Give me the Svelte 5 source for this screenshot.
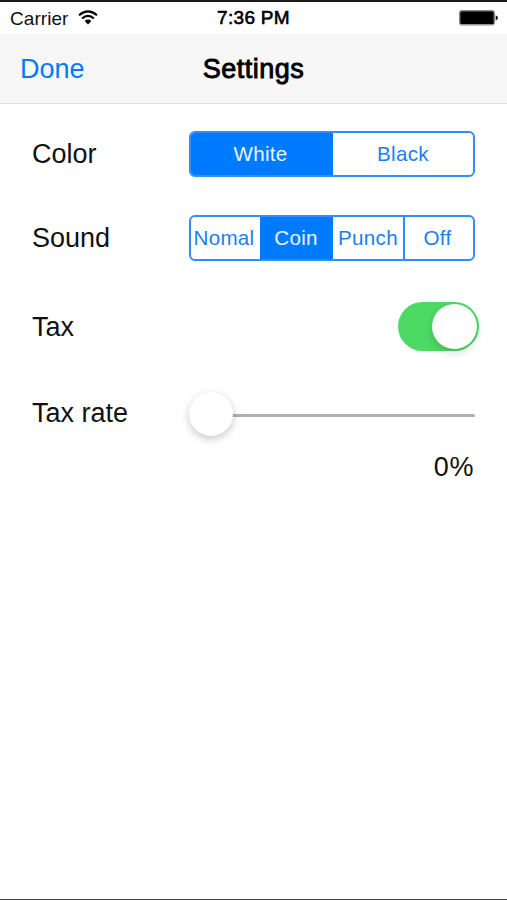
<script>
  let color = $state('White');
  let sound = $state('Coin');
  let taxOn = $state(true);
  let taxRate = $state(0);

  const colors = ['White', 'Black'];
  const sounds = ['Nomal', 'Coin', 'Punch', 'Off'];
</script>

<div class="screen">
  <div class="status">
    <div class="carrier">
      <span>Carrier</span>
      <svg width="20" height="15" viewBox="0 0 20 15">
        <path d="M1 5.2 Q10 -2.6 19 5.2" fill="none" stroke="#000" stroke-width="2.1" />
        <path d="M4.1 8.5 Q10 3.3 15.9 8.5" fill="none" stroke="#000" stroke-width="2.1" />
        <path d="M6.7 11 Q10 8.2 13.3 11 L10 14.4 Z" />
      </svg>
    </div>
    <span class="time">7:36 PM</span>
    <svg class="battery" width="40" height="16" viewBox="0 0 40 16">
      <rect x="0.5" y="0.5" width="35" height="14.5" rx="2" fill="none" stroke="#888" />
      <rect x="1.2" y="1.2" width="33.6" height="13.1" rx="1.4" />
      <path d="M36.7 5.2 Q39 6.2 39 7.8 Q39 9.4 36.7 10.4 Z" />
    </svg>
  </div>

  <header>
    <button class="done">Done</button>
    <h1>Settings</h1>
  </header>

  <main>
    <div class="row">
      <span class="label">Color</span>
      <div class="segmented two">
        {#each colors as item}
          <button class:selected={item === color} onclick={() => (color = item)}>{item}</button>
        {/each}
      </div>
    </div>

    <div class="row sound">
      <span class="label">Sound</span>
      <div class="segmented four">
        {#each sounds as item}
          <button class:selected={item === sound} onclick={() => (sound = item)}>{item}</button>
        {/each}
      </div>
    </div>

    <div class="row tax">
      <span class="label">Tax</span>
      <button class="switch" class:on={taxOn} aria-label="Tax" onclick={() => (taxOn = !taxOn)}>
        <span class="knob"></span>
      </button>
    </div>

    <div class="row rate">
      <span class="label">Tax rate</span>
      <input type="range" min="0" max="100" bind:value={taxRate} aria-label="Tax rate" />
    </div>

    <div class="value">{taxRate}%</div>
  </main>
</div>

<style>
  :global(body) {
    margin: 0;
    background: #fff;
  }

  .screen {
    box-sizing: border-box;
    width: 507px;
    height: 900px;
    border-top: 2px solid #1b191b;
    border-bottom: 1px solid #444;
    background: #fff;
    color: #111;
    font-family: "Liberation Sans", Arial, sans-serif;
    font-size: 27px;
    overflow: hidden;
  }

  button {
    margin: 0;
    padding: 0;
    border: 0;
    background: none;
    font: inherit;
    color: #007aff;
  }

  .status {
    display: grid;
    grid-template-columns: 1fr auto 1fr;
    align-items: center;
    height: 32px;
    padding: 0 8px 0 10px;
    font-size: 19px;
  }

  .carrier {
    display: flex;
    align-items: center;
    gap: 10px;
    padding-top: 1px;
    letter-spacing: 0.05px;
  }

  .carrier svg {
    margin-top: -3px;
  }

  .time {
    padding-right: 2px;
    color: #000;
    -webkit-text-stroke: 0.6px #000;
    letter-spacing: 0.3px;
  }

  .battery {
    justify-self: end;
  }

  header {
    display: grid;
    grid-template-columns: 1fr auto 1fr;
    align-items: center;
    box-sizing: border-box;
    height: 70px;
    padding: 2px 20px 0;
    border-bottom: 1px solid #e2e2e2;
    background: #f7f7f7;
  }

  .done {
    justify-self: start;
  }

  h1 {
    margin: 0;
    font-size: 27px;
    font-weight: normal;
    color: #000;
    letter-spacing: 0.5px;
    -webkit-text-stroke: 0.9px #000;
  }

  main {
    padding: 27px 32px 0 32px;
  }

  .row {
    display: flex;
    align-items: center;
    justify-content: space-between;
    height: 46px;
  }

  .sound {
    margin-top: 38px;
  }

  .tax {
    height: 50px;
    margin-top: 40px;
    margin-right: -4px;
  }

  .tax .label {
    padding-top: 2px;
  }

  .rate {
    margin-top: 41px;
  }

  .rate .label {
    padding-bottom: 4px;
  }

  .segmented {
    display: grid;
    box-sizing: border-box;
    width: 286px;
    height: 46px;
    border: 2px solid #2f8ef3;
    border-radius: 6px;
    overflow: hidden;
    font-size: 20.6px;
  }

  .two {
    grid-template-columns: 142px 1fr;
  }

  .four {
    grid-template-columns: 69px 73px 70px 1fr;
  }

  .segmented button {
    padding-right: 3px;
    color: #1a80ee;
    letter-spacing: 0.3px;
  }

  .segmented button + button {
    border-left: 2px solid #2f8ef3;
  }

  .segmented .selected,
  .segmented button.selected {
    background: #007aff;
    border-color: #007aff;
    color: #e8f4ff;
  }

  .segmented .selected + button {
    padding-right: 0;
    border-left: 0;
  }

  .switch {
    display: flex;
    align-items: center;
    box-sizing: border-box;
    width: 81px;
    height: 49px;
    padding: 0 2px;
    border-radius: 25px;
    background: #e5e5e5;
  }

  .switch.on {
    justify-content: flex-end;
    background: #4cd964;
  }

  .knob {
    width: 45px;
    height: 45px;
    border-radius: 50%;
    background: #fff;
    box-shadow: 0 4px 8px rgba(0, 0, 0, 0.15);
  }

  input {
    appearance: none;
    width: 286px;
    height: 46px;
    margin: 0;
    background: none;
  }

  input::-webkit-slider-runnable-track {
    height: 3px;
    border-radius: 2px;
    background: #b0b0b0;
  }

  input::-webkit-slider-thumb {
    appearance: none;
    width: 44px;
    height: 44px;
    margin-top: -22px;
    border-radius: 50%;
    background: #fff;
    box-shadow: 0 3px 8px rgba(0, 0, 0, 0.22);
  }

  .value {
    margin-top: 14px;
    padding-right: 1px;
    letter-spacing: 0.6px;
    text-align: right;
  }
</style>
